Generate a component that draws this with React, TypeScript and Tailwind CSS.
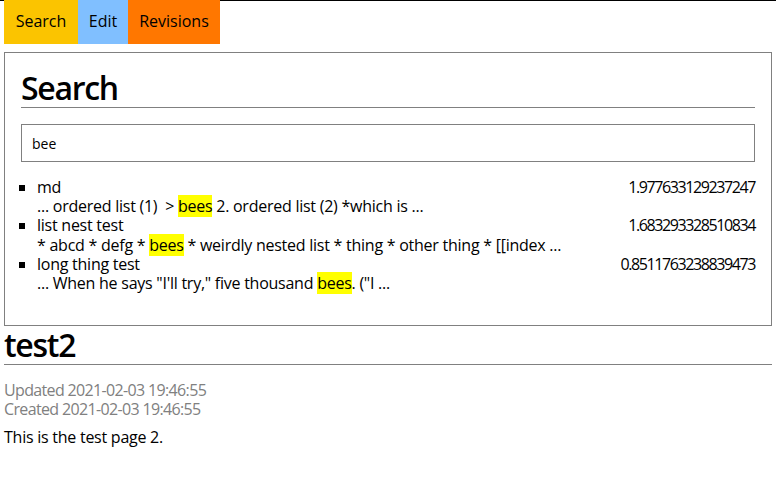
import React from "react";

const font = { fontFamily: "'Open Sans', 'Noto Sans', sans-serif" };

function Hl({ children }: { children: React.ReactNode }) {
  return <mark className="bg-[#ffff00] text-black">{children}</mark>;
}

export default function App() {
  const results = [
    {
      title: "md",
      score: "1.977633129237247",
      snippet: (
        <>
          ... ordered list (1)&nbsp; &gt; <Hl>bees</Hl> 2. ordered list (2) *which is ...
        </>
      ),
    },
    {
      title: "list nest test",
      score: "1.683293328510834",
      snippet: (
        <>
          * abcd * defg * <Hl>bees</Hl> * weirdly nested list * thing * other thing * [[index ...
        </>
      ),
    },
    {
      title: "long thing test",
      score: "0.8511763238839473",
      snippet: (
        <>
          ... When he says "I'll try," five thousand <Hl>bees</Hl>. ("I ...
        </>
      ),
    },
  ];
  return (
    <div className="min-h-[484px] bg-white border-t border-black px-1 text-black text-[16px] leading-[1.2] tracking-[-0.25px]" style={font}>
      <nav className="flex -mt-px tracking-normal">
        <a className="w-[74px] h-[44px] flex items-center justify-center bg-[#fbc400]">Search</a>
        <a className="w-[50px] h-[44px] flex items-center justify-center bg-[#80bfff]">Edit</a>
        <a className="w-[92px] h-[44px] flex items-center justify-center bg-[#ff7700]">Revisions</a>
      </nav>
      <section className="mt-2 border border-[#808080] px-4 pt-4 pb-4">
        <h1 className="text-[32px] leading-[38px] font-semibold tracking-[-1.3px] border-b border-[#808080]">Search</h1>
        <input
          className="mt-4 w-full h-[38px] border border-[#808080] px-[10px] text-[14px] outline-none tracking-normal"
          defaultValue="bee"
          style={font}
        />
        <ul className="mt-4 mb-4 pl-4 list-[square]">
          {results.map((r) => (
            <li key={r.title}>
              <div className="flex justify-between">
                <span>{r.title}</span>
                <span className="tracking-[-1.4px]">{r.score}</span>
              </div>
              <div>{r.snippet}</div>
            </li>
          ))}
        </ul>
      </section>
      <h1 className="text-[32px] leading-[38px] font-semibold tracking-[-1.3px] border-b border-[#808080]">test2</h1>
      <div className="mt-4 text-[#808080] tracking-[-0.65px]">
        <div>Updated 2021-02-03 19:46:55</div>
        <div>Created 2021-02-03 19:46:55</div>
      </div>
      <p className="mt-2">This is the test page 2.</p>
    </div>
  );
}
